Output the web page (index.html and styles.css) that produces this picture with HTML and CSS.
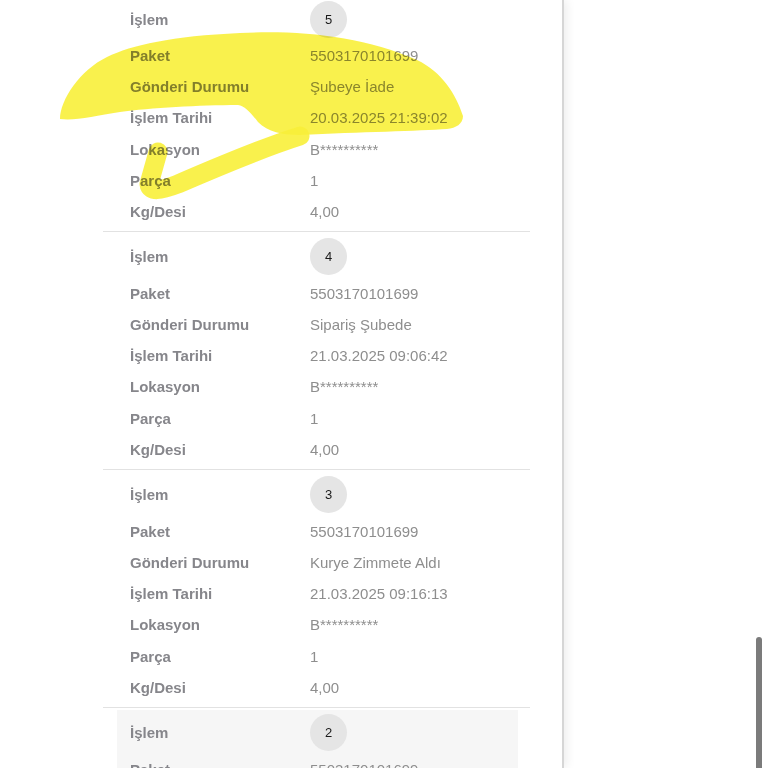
FILE: index.html
```html
<!DOCTYPE html>
<html lang="tr">
<head>
<meta charset="utf-8">
<title>Gönderi Hareketleri</title>
<link rel="stylesheet" href="styles.css">
</head>
<body>
<div class="sheet">
  <div class="list">
    <section class="entry">
      <div class="row head"><span class="label">İşlem</span><span class="badge">5</span></div>
      <div class="row"><span class="label">Paket</span><span class="value">5503170101699</span></div>
      <div class="row"><span class="label">Gönderi Durumu</span><span class="value">Şubeye İade</span></div>
      <div class="row"><span class="label">İşlem Tarihi</span><span class="value">20.03.2025 21:39:02</span></div>
      <div class="row"><span class="label">Lokasyon</span><span class="value">B**********</span></div>
      <div class="row"><span class="label">Parça</span><span class="value">1</span></div>
      <div class="row"><span class="label">Kg/Desi</span><span class="value">4,00</span></div>
    </section>
    <section class="entry">
      <div class="row head"><span class="label">İşlem</span><span class="badge">4</span></div>
      <div class="row"><span class="label">Paket</span><span class="value">5503170101699</span></div>
      <div class="row"><span class="label">Gönderi Durumu</span><span class="value">Sipariş Şubede</span></div>
      <div class="row"><span class="label">İşlem Tarihi</span><span class="value">21.03.2025 09:06:42</span></div>
      <div class="row"><span class="label">Lokasyon</span><span class="value">B**********</span></div>
      <div class="row"><span class="label">Parça</span><span class="value">1</span></div>
      <div class="row"><span class="label">Kg/Desi</span><span class="value">4,00</span></div>
    </section>
    <section class="entry">
      <div class="row head"><span class="label">İşlem</span><span class="badge">3</span></div>
      <div class="row"><span class="label">Paket</span><span class="value">5503170101699</span></div>
      <div class="row"><span class="label">Gönderi Durumu</span><span class="value">Kurye Zimmete Aldı</span></div>
      <div class="row"><span class="label">İşlem Tarihi</span><span class="value">21.03.2025 09:16:13</span></div>
      <div class="row"><span class="label">Lokasyon</span><span class="value">B**********</span></div>
      <div class="row"><span class="label">Parça</span><span class="value">1</span></div>
      <div class="row"><span class="label">Kg/Desi</span><span class="value">4,00</span></div>
    </section>
    <section class="entry active">
      <div class="row head"><span class="label">İşlem</span><span class="badge">2</span></div>
      <div class="row"><span class="label">Paket</span><span class="value">5503170101699</span></div>
      <div class="row"><span class="label">Gönderi Durumu</span><span class="value">Sipariş Şubede</span></div>
      <div class="row"><span class="label">İşlem Tarihi</span><span class="value">20.03.2025 18:12:40</span></div>
    </section>
  </div>
</div>
<div class="scrollbar"></div>
<svg class="marker" width="768" height="768" viewBox="0 0 768 768" aria-hidden="true">
  <path class="marker-fill" d="M 60 119 C 60 100, 80 70, 107 57 C 132 45, 172 36, 240 33 C 300 30, 362 36, 417 60 C 442 72, 456 94, 463 116 C 463 124, 456 128, 447 129 C 420 131, 360 132, 300 135 C 282 135, 268 132, 258 122 C 250 112, 245 106, 238 105 C 200 105, 150 108, 120 112 C 95 116, 75 121, 60 119 Z"/>
  <path class="marker-stroke" d="M 300 136 C 262 148, 215 168, 178 184 C 160 191, 150 192, 149 184 L 158 152"/>
</svg>
</body>
</html>
```

FILE: styles.css
```css
* {
  box-sizing: border-box;
}

html, body {
  margin: 0;
  padding: 0;
  height: 100%;
  overflow: hidden;
  background: #ffffff;
}

body {
  font-family: "Liberation Sans", Arial, Helvetica, sans-serif;
  font-size: 15px;
  position: relative;
}

.sheet {
  width: 564px;
  height: 100vh;
  border-right: 2px solid #d6d6d6;
  box-shadow: 3px 0 9px rgba(0, 0, 0, 0.07);
  background: #ffffff;
  overflow: hidden;
}

.list {
  margin-left: 103px;
  width: 427px;
  margin-top: -5.5px;
}

.entry {
  padding: 6px 0 4.4px;
  border-bottom: 1px solid #e2e2e2;
}

.entry.active {
  background: #f6f6f6;
  margin: 1.5px 12px 0 14px;
  padding-top: 4.5px;
  border-bottom: none;
}

.row {
  display: grid;
  grid-template-columns: 180px 1fr;
  align-items: center;
  height: 31.2px;
  padding-left: 27px;
}

.entry.active .row {
  padding-left: 13px;
}

.row.head {
  height: 37px;
  margin-bottom: 2.4px;
}

.label {
  font-weight: bold;
  color: #86868b;
  white-space: nowrap;
}

.value {
  color: #8e8e8e;
  white-space: nowrap;
}

.badge {
  width: 37px;
  height: 37px;
  border-radius: 50%;
  background: #e5e5e5;
  color: #1a1a1a;
  font-size: 13px;
  display: flex;
  align-items: center;
  justify-content: center;
}

.scrollbar {
  position: absolute;
  left: 756px;
  top: 637px;
  width: 6px;
  height: 140px;
  border-radius: 3px;
  background: #7b7b7b;
}

.marker {
  position: absolute;
  left: 0;
  top: 0;
  pointer-events: none;
  mix-blend-mode: multiply;
}

.marker-fill {
  fill: #f8f03a;
  opacity: 0.9;
}

.marker-stroke {
  fill: none;
  stroke: #f8f03a;
  stroke-width: 19;
  stroke-linecap: round;
  stroke-linejoin: round;
  opacity: 0.9;
}
```
